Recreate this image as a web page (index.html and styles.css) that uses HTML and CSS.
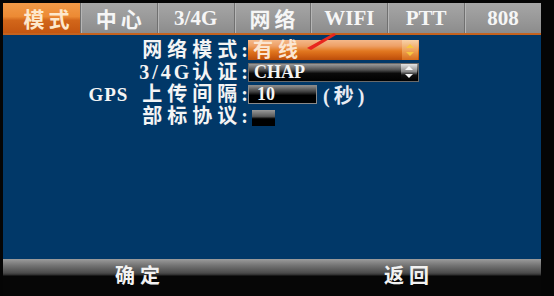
FILE: index.html
```html
<!DOCTYPE html>
<html>
<head>
  <title>网络模式</title>
  <link rel="stylesheet" href="styles.css">
</head>
<body>
  <div class="screen">
    <div class="tabs">
      <div class="tab active">模式</div>
      <div class="tab">中心</div>
      <div class="tab latin">3/4G</div>
      <div class="tab">网络</div>
      <div class="tab latin">WIFI</div>
      <div class="tab latin">PTT</div>
      <div class="tab latin">808</div>
    </div>

    <div class="panel">
      <div class="form">
        <div class="label">网络模式<span class="colon">:</span></div>
        <div class="field">
          <div class="select orange">
            <span class="value">有线</span>
            <span class="spin">
              <svg width="10" height="14" viewBox="0 0 10 14"><polygon points="5,1 9,5 1,5" /><polygon points="1,9 9,9 5,13" /></svg>
            </span>
          </div>
        </div>

        <div class="label"><span class="latin-txt">3/4G</span>认证<span class="colon">:</span></div>
        <div class="field">
          <div class="select dark">
            <span class="value latin-txt">CHAP</span>
            <span class="spin">
              <svg width="10" height="14" viewBox="0 0 10 14"><polygon points="5,1 9,5 1,5" /><polygon points="1,9 9,9 5,13" /></svg>
            </span>
          </div>
        </div>

        <div class="label"><span class="gps">GPS</span>上传间隔<span class="colon">:</span></div>
        <div class="field">
          <div class="input"><span class="value latin-txt">10</span></div>
          <span class="unit">(秒)</span>
        </div>

        <div class="label">部标协议<span class="colon">:</span></div>
        <div class="field">
          <div class="box"></div>
        </div>
      </div>
    </div>

    <div class="footer">
      <div class="softkey">确定</div>
      <div class="softkey">返回</div>
    </div>

    <!-- red pen stroke from the video -->
    <svg class="mark" width="36" height="22" viewBox="0 0 36 22">
      <polygon points="2,17 6,19 31,4 29,2" fill="#e8261e" />
    </svg>
  </div>
</body>
</html>
```

FILE: styles.css
```css
body {
  margin: 0;
  background: #050505;
  font-family: "Liberation Serif", "Noto Sans CJK SC", serif;
  font-weight: bold;
  color: #f4f4f4;
}

.screen {
  position: relative;
  width: 538px;
  height: 296px;
  margin-left: 3px;
  padding-top: 3px;
  box-sizing: border-box;
}

.tabs {
  display: grid;
  grid-template-columns: repeat(7, 1fr);
  height: 29px;
  border-bottom: 3px solid #c4621e;
}

.tab {
  display: flex;
  align-items: center;
  justify-content: center;
  font-size: 21px;
  letter-spacing: 4px;
  padding-left: 4px;
  background: linear-gradient(#a6a6a6, #979797 60%, #8c8c8c);
  border-left: 1px solid #707070;
  box-shadow: inset 1px 0 0 #b6b6b6;
  color: #f6f6f6;
}

.tab.latin {
  letter-spacing: 0;
  padding-left: 0;
}

.tab.active {
  border-left: none;
  box-shadow: none;
  padding-left: 14px;
  color: #fde8cc;
  background: linear-gradient(#f29a48 0%, #ec8a34 45%, #d2661a 58%, #c45610 100%);
}

.panel {
  height: 224px;
  padding-top: 4px;
  box-sizing: border-box;
  background: #013868;
}

.form {
  display: grid;
  grid-template-columns: 245px 1fr;
  grid-auto-rows: 22px;
  align-items: center;
}

.label {
  text-align: right;
  font-size: 20px;
  line-height: 22px;
  letter-spacing: 5px;
  white-space: nowrap;
}

.colon {
  letter-spacing: 0;
  margin-left: -1px;
}

.latin-txt {
  letter-spacing: 3px;
}

.gps {
  letter-spacing: 1px;
  font-size: 19px;
  margin-right: 14px;
}

.field {
  display: flex;
  align-items: center;
  gap: 6px;
}

.select {
  display: flex;
  align-items: center;
  justify-content: space-between;
  width: 171px;
  height: 20px;
  box-sizing: border-box;
}

.value {
  padding-left: 5px;
  font-size: 19px;
  line-height: 20px;
}

.select.orange .value {
  font-size: 20px;
  letter-spacing: 5px;
  color: #fbe6d2;
}

.select.orange {
  background: linear-gradient(#f4b88a 0%, #eea066 30%, #e27820 55%, #cf5f12 80%, #b94c0a 100%);
}

.select.dark {
  height: 19px;
  background: linear-gradient(#9a9a9a 0%, #505050 35%, #0a0a0a 55%, #000 100%);
  border: 1px solid #6a6a6a;
}

.select.dark .value,
.input .value {
  font-size: 18px;
  letter-spacing: 0;
}

.spin {
  display: flex;
  align-items: center;
  justify-content: center;
  width: 16px;
  height: 100%;
  margin-right: 1px;
}

.select.orange .spin {
  background: linear-gradient(#f8d2aa, #ec9a4c 60%, #d86c1c);
}

.select.orange .spin polygon {
  fill: #f6c640;
}

.select.dark .spin {
  background: linear-gradient(#e4e4e4, #8a8a8a 45%, #111 65%, #000);
}

.select.dark .spin polygon {
  fill: #f4f4f4;
}

.input {
  width: 69px;
  height: 19px;
  box-sizing: border-box;
  border: 1px solid #8a8a8a;
  background: linear-gradient(#8a8a8a 0%, #3c3c3c 35%, #000 55%, #000 100%);
  display: flex;
  align-items: center;
}

.input .value {
  padding-left: 8px;
}

.unit {
  font-size: 20px;
  letter-spacing: 4px;
  color: #e8ecf4;
}

.box {
  width: 23px;
  height: 16px;
  margin-left: 4px;
  margin-top: 3px;
  background: linear-gradient(#9a9a9a 0%, #5a5a5a 40%, #000 55%, #000 100%);
}

.footer {
  display: grid;
  grid-template-columns: 1fr 1fr;
  height: 37px;
  padding-top: 6px;
  box-sizing: border-box;
  background: linear-gradient(#9c9c9c 0px, #767676 6px, #4a4a4a 14px, #2c2c2c 16px, #060606 17px, #060606 100%);
}

.softkey {
  text-align: center;
  font-size: 20px;
  line-height: 22px;
  letter-spacing: 5px;
  padding-left: 5px;
  color: #f2f2f2;
}

.mark {
  position: absolute;
  left: 302px;
  top: 31px;
}
```
